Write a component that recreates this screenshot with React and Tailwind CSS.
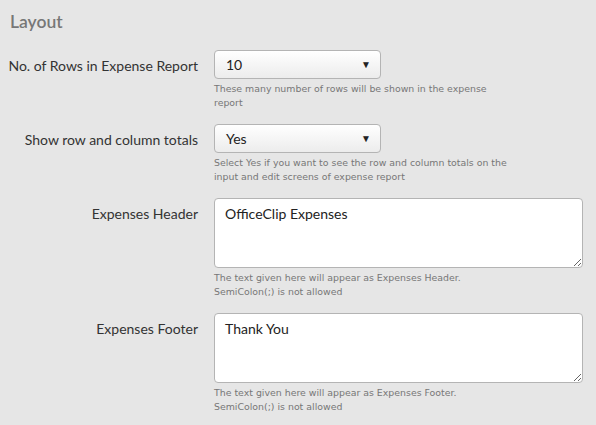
import { useState } from 'react';

const font = { fontFamily: "Lato, 'Noto Sans', sans-serif" };
const small = { fontFamily: "'DejaVu Sans', Verdana, sans-serif" };

const SelectBox = ({ value }) => (
  <div className="flex h-[29px] w-[167px] items-center justify-between rounded-[4px] border border-[#b4b4b4] bg-gradient-to-b from-white to-[#ececec] pl-[11px] pr-[9px] text-[14px] text-[#222]">
    <span>{value}</span>
    <span className="text-[10px] text-[#222]">▼</span>
  </div>
);

const Help = ({ children }) => (
  <p className="mt-[3px] max-w-[300px] text-[9.4px] leading-[14px] text-[#777]" style={small}>
    {children}
  </p>
);

const Row = ({ label, children, top = 'pt-[5px]' }) => (
  <div className="flex items-start">
    <div className={`w-[198px] shrink-0 text-right text-[14px] text-[#333] ${top}`}>{label}</div>
    <div className="ml-[16px]">{children}</div>
  </div>
);

const Area = ({ value }) => {
  const [text, setText] = useState(value);
  return (
    <textarea
      value={text}
      onChange={(e) => setText(e.target.value)}
      className="block h-[70px] w-[369px] resize-y rounded-[4px] border border-[#b4b4b4] bg-white px-[10px] py-[4px] text-[14px] text-[#222] outline-none"
      style={font}
    />
  );
};

export default function App() {
  return (
    <div className="min-h-screen bg-[#e6e6e6] pt-[9px]" style={font}>
      <h2 className="pl-[10px] text-[17.5px] font-semibold leading-[26px] text-[#777]">Layout</h2>
      <div className="mt-[15px] flex flex-col gap-[14px]">
        <Row label="No. of Rows in Expense Report">
          <SelectBox value="10" />
          <Help>These many number of rows will be shown in the expense report</Help>
        </Row>
        <Row label="Show row and column totals">
          <SelectBox value="Yes" />
          <Help>Select Yes if you want to see the row and column totals on the input and edit screens of expense report</Help>
        </Row>
        <Row label="Expenses Header" top="pt-[5px]">
          <Area value="OfficeClip Expenses" />
          <Help>The text given here will appear as Expenses Header.<br />SemiColon(;) is not allowed</Help>
        </Row>
        <Row label="Expenses Footer" top="pt-[5px]">
          <Area value="Thank You" />
          <Help>The text given here will appear as Expenses Footer.<br />SemiColon(;) is not allowed</Help>
        </Row>
      </div>
    </div>
  );
}
